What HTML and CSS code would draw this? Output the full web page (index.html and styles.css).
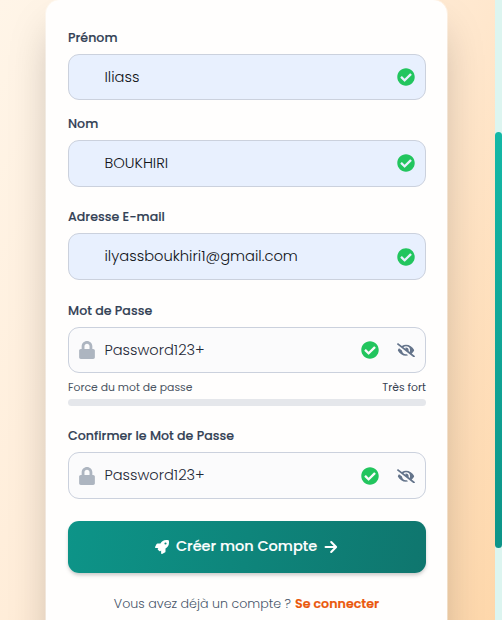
FILE: index.html
```html
<!DOCTYPE html>
<html lang="fr">
<head>
<meta charset="utf-8">
<title>Créer un compte</title>
<link rel="stylesheet" href="styles.css">
</head>
<body>
<svg class="sprite" aria-hidden="true">
  <symbol id="check" viewBox="0 0 512 512"><path d="M504 256c0 136.967-111.033 248-248 248S8 392.967 8 256 119.033 8 256 8s248 111.033 248 248zM227.314 387.314l184-184c6.248-6.248 6.248-16.379 0-22.627l-22.627-22.627c-6.248-6.249-16.379-6.249-22.628 0L216 308.118l-70.059-70.059c-6.248-6.248-16.379-6.248-22.628 0l-22.627 22.627c-6.248 6.248-6.248 16.379 0 22.627l104 104c6.249 6.249 16.379 6.249 22.628.001z"/></symbol>
  <symbol id="lock" viewBox="0 0 448 512"><path d="M400 224h-24v-72C376 68.2 307.8 0 224 0S72 68.2 72 152v72H48c-26.5 0-48 21.5-48 48v192c0 26.5 21.5 48 48 48h352c26.5 0 48-21.5 48-48V272c0-26.5-21.5-48-48-48zm-104 0H152v-72c0-39.7 32.3-72 72-72s72 32.3 72 72v72z"/></symbol>
  <symbol id="eye-slash" viewBox="0 0 640 512"><path d="M320 400c-75.85 0-137.25-58.71-142.9-133.11L72.2 185.82c-13.79 17.3-26.48 35.59-36.72 55.59a32.35 32.35 0 0 0 0 29.19C89.71 376.41 197.07 448 320 448c26.91 0 52.87-4 77.89-10.46L346 397.39a144.13 144.13 0 0 1-26 2.61zm313.82 58.1l-110.55-85.44a331.25 331.25 0 0 0 81.25-102.07 32.35 32.35 0 0 0 0-29.19C550.29 135.59 442.93 64 320 64a308.15 308.15 0 0 0-147.32 37.7L45.46 3.37A16 16 0 0 0 23 6.18L3.37 31.45A16 16 0 0 0 6.18 53.9l588.36 454.73a16 16 0 0 0 22.46-2.81l19.64-25.27a16 16 0 0 0-2.82-22.45zm-183.72-142l-39.3-30.38A94.75 94.75 0 0 0 416 256a94.76 94.76 0 0 0-121.31-92.21A47.65 47.65 0 0 1 304 192a46.64 46.64 0 0 1-1.54 10l-73.61-56.89A142.31 142.31 0 0 1 320 112a143.92 143.92 0 0 1 144 144c0 21.63-5.29 41.79-13.9 60.11z"/></symbol>
  <symbol id="rocket" viewBox="0 0 512 512"><path d="M505.12 19.094c-1.189-5.531-6.658-11-12.207-12.188C460.716 0 435.507 0 410.407 0 307.175 0 245.269 55.203 199.052 128H94.838c-16.348.016-35.557 11.875-42.887 26.484L2.516 253.297A28.4 28.4 0 0 0 0 264a24.009 24.009 0 0 0 24.006 24H127.816l-22.475 22.469c-11.365 11.361-12.996 32.258 0 45.25L156.246 406.625c11.156 11.188 32.156 13.156 45.277 0l22.475-22.469V488a24.009 24.009 0 0 0 24.006 24 28.559 28.559 0 0 0 10.707-2.516l98.728-49.391c14.629-7.297 26.508-26.5 26.508-42.859V312.797c72.598-46.313 128.035-108.406 128.035-211.094C512.075 76.5 512.075 51.297 505.12 19.094ZM384.04 168A40 40 0 1 1 424.05 128 40.023 40.023 0 0 1 384.04 168Z"/></symbol>
  <symbol id="arrow" viewBox="0 0 14 14"><path d="M1.6 7H12M7.2 2.1L12.1 7l-4.9 4.9" fill="none" stroke="currentColor" stroke-width="2.1" stroke-linecap="round" stroke-linejoin="round"/></symbol>
</svg>
<div class="page">
  <main class="card">
    <form class="form">
      <div class="field">
        <label class="label">Prénom</label>
        <div class="control filled"><span class="value">Iliass</span><svg class="ok"><use href="#check"/></svg></div>
      </div>
      <div class="field nom">
        <label class="label">Nom</label>
        <div class="control filled tall"><span class="value">BOUKHIRI</span><svg class="ok"><use href="#check"/></svg></div>
      </div>
      <div class="field mail">
        <label class="label">Adresse E-mail</label>
        <div class="control filled tall"><span class="value">ilyassboukhiri1@gmail.com</span><svg class="ok"><use href="#check"/></svg></div>
      </div>
      <div class="field pass">
        <label class="label">Mot de Passe</label>
        <div class="control"><svg class="lock"><use href="#lock"/></svg><span class="value">Password123+</span><svg class="ok"><use href="#check"/></svg><svg class="eye"><use href="#eye-slash"/></svg></div>
        <div class="strength"><span>Force du mot de passe</span><span class="level">Très fort</span></div>
        <div class="meter"></div>
      </div>
      <div class="field confirm">
        <label class="label">Confirmer le Mot de Passe</label>
        <div class="control tall"><svg class="lock"><use href="#lock"/></svg><span class="value">Password123+</span><svg class="ok"><use href="#check"/></svg><svg class="eye"><use href="#eye-slash"/></svg></div>
      </div>
      <button class="submit" type="button"><svg class="rocket"><use href="#rocket"/></svg><span class="caption">Créer mon Compte</span><svg class="arrow"><use href="#arrow"/></svg></button>
      <p class="login"><span>Vous avez déjà un compte ?</span><a class="link">Se connecter</a></p>
    </form>
  </main>
  <div class="scrollbar"><div class="thumb"></div></div>
</div>
</body>
</html>
```
FILE: styles.css
```css
* { box-sizing: border-box; }
html, body { height: 100%; }
body {
  margin: 0;
  overflow: hidden;
  font-family: Poppins, Inter, "Open Sans", sans-serif;
  color: #1f2937;
}
.sprite { position: absolute; width: 0; height: 0; }
svg { fill: currentColor; flex: none; }
.page {
  display: flex;
  height: 620px;
  background: linear-gradient(120deg, #fff5e8 0%, #ffedd9 42%, #ffe7cd 58%, #fed7aa 100%);
  overflow: hidden;
}
.card {
  width: 403px;
  height: 700px;
  margin: -1px auto 0 45px;
  flex: none;
  padding: 30px 22px 0;
  border: 1px solid rgba(255, 255, 255, .4);
  border-radius: 15px;
  background: #fffefd;
  background-clip: padding-box;
  box-shadow: 0 23px 46px -11px rgba(0, 0, 0, .28);
}
.form { width: 358px; }
.label {
  display: block;
  height: 16px;
  margin-bottom: 8px;
  line-height: 16px;
  font-size: 12.6px;
  font-weight: 500;
  letter-spacing: .02px;
  -webkit-text-stroke: .15px;
  color: #334155;
  white-space: nowrap;
}
.control {
  display: flex;
  align-items: center;
  height: 46px;
  padding: 0 10px;
  border: 1px solid #cbd1dd;
  border-radius: 11px;
  background: #fbfbfc;
  color: #64748b;
}
.tall { height: 47px; }
.filled { background: #e8f0fe; padding-left: 35.5px; }
.value {
  flex: 1;
  font-size: 14.6px;
  font-weight: 300;
  line-height: 22px;
  color: #1f2937;
  white-space: nowrap;
}
.tall .value { margin-bottom: 1px; }
.filled .value { color: #101318; font-size: 14.7px; }
.nom { margin-top: 16px; }
.mail { margin-top: 22px; }
.pass { margin-top: 23px; }
.confirm { margin-top: 22px; }
.ok { width: 18px; height: 18px; color: #22c55e; }
.nom .ok { margin-bottom: 1px; }
.eye { width: 18px; height: 14.5px; margin-left: 18px; color: #64748b; }
.confirm .eye { margin-top: 1px; }
.lock { width: 16px; height: 18px; margin-right: 9.5px; color: #adb5c0; }
.strength {
  display: flex;
  justify-content: space-between;
  height: 16px;
  margin: 7px 0 3px;
  font-size: 10.85px;
  line-height: 16px;
  color: #4b5563;
}
.level { color: #374151; }
.meter { height: 7px; border-radius: 4px; background: #e5e7eb; }
.submit {
  display: flex;
  align-items: center;
  justify-content: center;
  width: 100%;
  height: 52px;
  margin-top: 22px;
  padding: 0 1px 1px 0;
  border: 0;
  border-radius: 11px;
  background: linear-gradient(100deg, #0d9488, #0f766e);
  box-shadow: 0 3px 5px -1px rgba(0, 0, 0, .16), 0 2px 3px rgba(0, 0, 0, .08);
  color: #fff;
  font: 500 14.5px/22px Poppins, Inter, "Open Sans", sans-serif;
  -webkit-text-stroke: .15px;
  white-space: nowrap;
}
.caption { margin-bottom: 1px; }
.rocket { width: 14px; height: 14px; margin: 1px 7px 0 0; }
.arrow { width: 14px; height: 14px; margin: 1px 0 0 7px; }
.login {
  display: flex;
  gap: 4px;
  justify-content: center;
  margin: 22px 0 0;
  padding-right: 1px;
  font-size: 12.65px;
  line-height: 18px;
  font-weight: 300;
  color: #475569;
  white-space: nowrap;
}
.link { color: #ea580c; font-weight: 600; -webkit-text-stroke: .15px; }
.scrollbar {
  width: 7px;
  height: 620px;
  padding-top: 132px;
  background: #dcf5f0;
}
.thumb { height: 416px; border-radius: 4px; background: linear-gradient(#14b8a6, #0d9488); }
```
